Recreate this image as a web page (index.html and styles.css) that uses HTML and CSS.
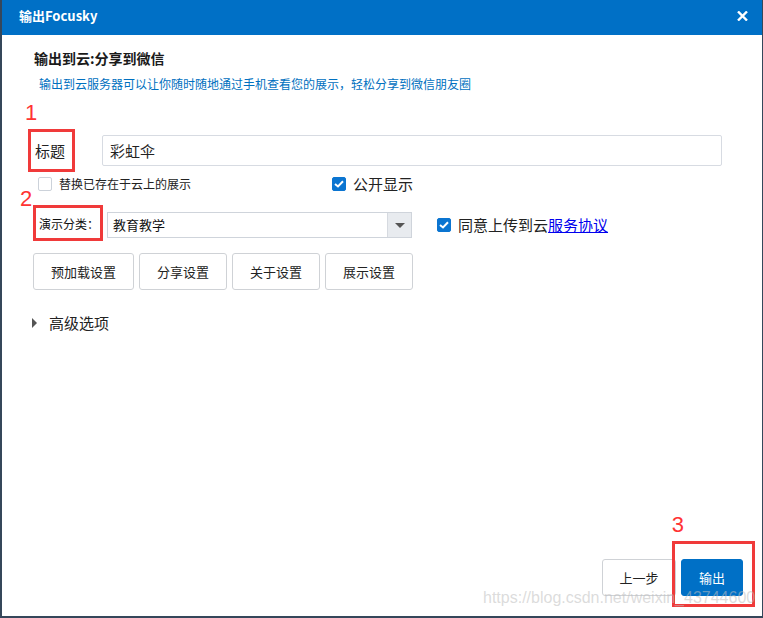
FILE: index.html
```html
<!DOCTYPE html>
<html lang="zh-CN">
<head>
<meta charset="utf-8">
<title>输出Focusky</title>
<link rel="stylesheet" href="styles.css">
</head>
<body>
<div class="dialog">
  <div class="titlebar">
    <span class="title">输出Focusky</span>
    <svg class="close" width="11" height="10" viewBox="0 0 11 10"><path d="M1 0.5 L10 9.5 M10 0.5 L1 9.5" stroke="#fff" stroke-width="2.4" fill="none"/></svg>
  </div>
  <div class="content">
    <h1 class="heading">输出到云:分享到微信</h1>
    <p class="subtitle">输出到云服务器可以让你随时随地通过手机查看您的展示，轻松分享到微信朋友圈</p>

    <div class="row row-title">
      <span class="mark mark-1">1</span>
      <label class="label-title">标题<span class="redbox box-1"></span></label>
      <div class="input">彩虹伞</div>
    </div>

    <div class="row row-checks">
      <span class="check-item check-replace"><span class="cb"></span><span class="cb-text small">替换已存在于云上的展示</span></span>
      <span class="check-item check-public"><span class="cb on"><svg width="10" height="8" viewBox="0 0 10 8"><path d="M1 4 L4 6.5 L9 1.3" stroke="#fff" stroke-width="2" fill="none"/></svg></span><span class="cb-text">公开显示</span></span>
    </div>

    <div class="row row-category">
      <span class="mark mark-2">2</span>
      <label class="label-cat">演示分类<span class="colon">：</span><span class="redbox box-2"></span></label>
      <div class="select"><span class="select-value">教育教学</span><span class="select-btn"><span class="tri-down"></span></span></div>
      <span class="check-item check-agree"><span class="cb on"><svg width="10" height="8" viewBox="0 0 10 8"><path d="M1 4 L4 6.5 L9 1.3" stroke="#fff" stroke-width="2" fill="none"/></svg></span><span class="cb-text">同意上传到云<a class="link" href="#">服务协议</a></span></span>
    </div>

    <div class="row row-buttons">
      <button class="btn btn-wide">预加载设置</button>
      <button class="btn">分享设置</button>
      <button class="btn">关于设置</button>
      <button class="btn">展示设置</button>
    </div>

    <div class="row row-advanced">
      <span class="tri-right"></span>
      <span class="adv-text">高级选项</span>
    </div>

    <div class="footer">
      <button class="fbtn fbtn-prev">上一步</button>
      <button class="fbtn fbtn-primary">输出</button>
      <span class="mark mark-3">3</span>
      <span class="redbox box-3"></span>
    </div>
  </div>
  <div class="watermark">https://blog.csdn.net/weixin_43744600</div>
</div>
</body>
</html>
```

FILE: styles.css
```css
* { box-sizing: border-box; }
html, body { margin: 0; padding: 0; }
body {
  width: 763px;
  height: 618px;
  background: #35475a;
  font-family: "Noto Sans CJK SC", "Noto Sans", sans-serif;
  color: #222;
  overflow: hidden;
}
.dialog {
  position: relative;
  margin-left: 2px;
  width: 760px;
  height: 616px;
  background: #fff;
  display: flex;
  flex-direction: column;
}
.titlebar {
  height: 35px;
  background: #0070c6;
  display: flex;
  align-items: center;
  justify-content: space-between;
  padding: 0 14px 0 17px;
  flex: none;
}
.title {
  color: #fff;
  font-weight: bold;
  font-size: 13px;
  line-height: 16px;
  margin-top: -3px;
}
.close { margin-top: -4px; }
.content {
  flex: 1;
  display: flex;
  flex-direction: column;
  position: relative;
}
.heading {
  margin: 13px 0 0 32px;
  font-size: 14px;
  line-height: 20px;
  font-weight: bold;
  color: #1a1a1a;
}
.subtitle {
  margin: 8px 0 0 37px;
  font-size: 12px;
  line-height: 16px;
  color: #0070c0;
}
.row {
  display: flex;
  align-items: center;
  position: relative;
}
.mark {
  position: absolute;
  color: #ff3333;
  font-family: "Liberation Sans", Arial, sans-serif;
  font-size: 22px;
  line-height: 22px;
}
.redbox {
  position: absolute;
  border: 3px solid #f03a3a;
}
.row-title {
  margin-top: 43px;
  height: 31px;
}
.mark-1 { left: 23px; top: -33px; }
.label-title {
  position: relative;
  width: 100px;
  padding-left: 33px;
  font-size: 15px;
  line-height: 20px;
  color: #222;
}
.box-1 { left: 26px; top: -12px; width: 47px; height: 43px; }
.input {
  width: 620px;
  height: 31px;
  border: 1px solid #d7dbe2;
  border-radius: 2px;
  font-size: 15px;
  line-height: 29px;
  padding-left: 7px;
  color: #222;
}
.row-checks {
  margin-top: 9px;
  height: 18px;
}
.check-item {
  display: flex;
  align-items: center;
}
.cb {
  width: 14px;
  height: 14px;
  border: 1px solid #ccd2da;
  border-radius: 2px;
  background: #fff;
  display: flex;
  align-items: center;
  justify-content: center;
  flex: none;
}
.cb.on {
  background: #0b75d1;
  border-color: #0b75d1;
}
.cb-text {
  margin-left: 7px;
  font-size: 15px;
  line-height: 18px;
  color: #222;
}
.cb-text.small { font-size: 12px; }
.check-replace { margin-left: 36px; width: 294px; }
.row-category {
  margin-top: 19px;
  height: 26px;
}
.mark-2 { left: 18px; top: -24px; }
.label-cat {
  position: relative;
  width: 105px;
  padding-left: 37px;
  font-size: 12px;
  line-height: 16px;
  color: #111;
  margin-top: -2px;
  display: flex;
}
.colon {
  display: inline-block;
  width: 12px;
  text-align: center;
}
.box-2 { left: 31px; top: -11px; width: 70px; height: 36px; }
.select {
  width: 305px;
  height: 26px;
  border: 1px solid #cfd4db;
  display: flex;
  align-items: stretch;
}
.select-value {
  flex: 1;
  font-size: 13px;
  line-height: 24px;
  padding-left: 5px;
  color: #111;
}
.select-btn {
  width: 24px;
  background: #e8ebef;
  border-left: 1px solid #d6dae0;
  display: flex;
  align-items: center;
  justify-content: center;
}
.tri-down {
  width: 0; height: 0;
  border-left: 5px solid transparent;
  border-right: 5px solid transparent;
  border-top: 5px solid #555;
}
.check-agree { margin-left: 25px; }
.link { color: #0000ee; text-decoration: underline; }
.row-buttons {
  margin-top: 15px;
  margin-left: 31px;
  gap: 5px;
  height: 37px;
}
.btn {
  width: 88px;
  height: 37px;
  background: #fff;
  border: 1px solid #cfd2d6;
  border-radius: 3px;
  font-family: "Noto Sans CJK SC", sans-serif;
  font-size: 13px;
  color: #222;
  padding: 0;
}
.btn-wide { width: 101px; }
.row-advanced {
  margin-top: 24px;
  height: 18px;
  margin-left: 30px;
}
.tri-right {
  width: 0; height: 0;
  border-top: 5px solid transparent;
  border-bottom: 5px solid transparent;
  border-left: 5px solid #555;
}
.adv-text {
  margin-left: 12px;
  font-size: 15px;
  line-height: 18px;
  color: #222;
}
.footer {
  margin-top: auto;
  display: flex;
  justify-content: flex-end;
  gap: 5px;
  padding: 0 19px 20px 0;
  position: relative;
}
.fbtn {
  height: 37px;
  border-radius: 3px;
  font-family: "Noto Sans CJK SC", sans-serif;
  font-size: 13px;
  padding: 0;
}
.fbtn-prev {
  width: 74px;
  background: #fff;
  border: 1px solid #cfd2d6;
  color: #222;
}
.fbtn-primary {
  width: 62px;
  background: #0070c6;
  border: 1px solid #0070c6;
  color: #fff;
}
.mark-3 { right: 78px; top: -45px; }
.box-3 { right: 7px; top: -18px; width: 83px; height: 66px; }
.watermark {
  position: absolute;
  left: 481px;
  top: 589px;
  font-family: "Liberation Sans", Arial, sans-serif;
  font-size: 16px;
  line-height: 18px;
  color: rgba(190, 190, 190, 0.55);
  white-space: nowrap;
}
```
